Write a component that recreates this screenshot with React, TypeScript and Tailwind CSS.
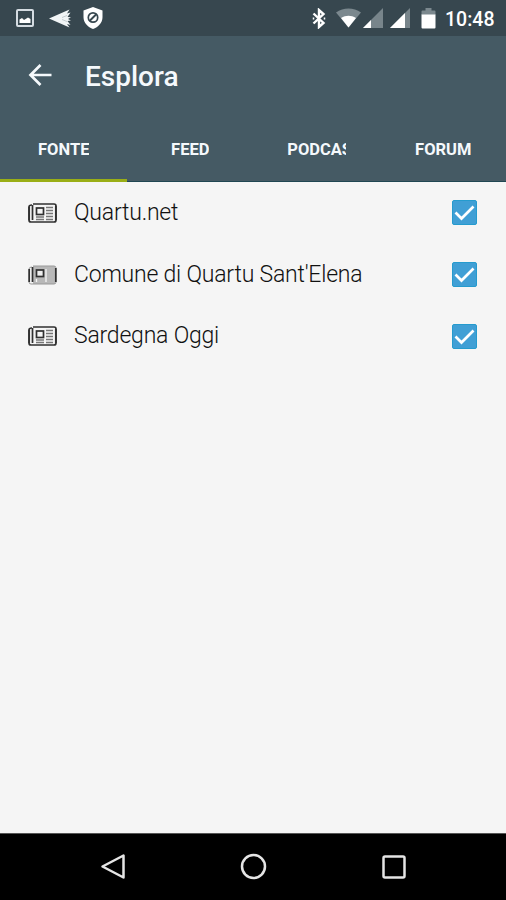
const FONT = "font-['Roboto','Liberation_Sans',sans-serif]";

function StatusBar() {
  return (
    <div className="flex h-9 shrink-0 items-center bg-[#37474f] pl-4 pr-[11px] text-white">
      <svg className="h-[18px] w-[18px]" viewBox="0 0 18 18">
        <rect x="1" y="1" width="16" height="16" rx="1" fill="none" stroke="#d5dce2" strokeWidth="2" />
        <path d="M3.500 14V10.500L6 9l2 2 4-2.500 2.500 1.500v4Z" fill="#fff" />
      </svg>
      <svg className="ml-[15px] h-[19px] w-[22px]" viewBox="0 0 22 19" fill="#f1f5f6">
        <path d="M0 9.500 20.500 0.500 18 4.500l3.500-1L18.500 8l3.500.2L19 10l3 1.500-3.500.500 3 4-3.500-1L20.500 18.500Z" />
        <path d="M13 8.500 18 6.500M13 10.500 18 12.500" stroke="#a4b0b5" strokeWidth="0.600" />
      </svg>
      <svg className="ml-3 h-[22px] w-5" viewBox="0 0 20 22">
        <path d="M10 0 19.500 3.500V10c0 6-4.500 10-9.500 12C5 20 .5 16 .5 10V3.500Z" fill="#fff" />
        <circle cx="10" cy="10.500" r="4.700" fill="none" stroke="#37474f" strokeWidth="1.700" />
        <path d="m6.500 14 7-7" stroke="#37474f" strokeWidth="2" />
      </svg>
      <div className="ml-auto flex items-center">
        <svg className="h-[21px] w-[14px]" viewBox="0 0 14 21" fill="none" stroke="#fff" strokeWidth="2.400">
          <path d="m1.500 5.500 10 9.500L7 19v-17l4.500 4L1.500 15.500" />
          <path d="M1.500 9.500v2M12.500 9.500v2" strokeWidth="1.500" />
        </svg>
        <svg className="ml-[10px] h-5 w-[25px]" viewBox="0 0 25 20">
          <path d="M0 4.500C7.500-1 17.500-1 25 4.500L12.500 19.500Z" fill="#7b888e" />
          <path d="M5 10C10 7 15 7 20 10L12.500 19.500Z" fill="#fff" />
        </svg>
        <svg className="ml-[2px] h-5 w-5" viewBox="0 0 20 20">
          <path d="M20 0v20H0Z" fill="#78858b" />
          <path d="M8 12v8H0Z" fill="#fff" />
        </svg>
        <svg className="ml-[7px] h-5 w-5" viewBox="0 0 20 20">
          <path d="M20 0v20H0Z" fill="#78858b" />
          <path d="M15 5v15H0Z" fill="#fff" />
        </svg>
        <svg className="ml-[11px] h-[21px] w-[15px]" viewBox="0 0 15 21">
          <path d="M.5 7V3.500q0-1 1-1h3V0h6v2.500h3q1 0 1 1V7Z" fill="#7b888e" />
          <path d="M.5 6.500h14V19.500q0 1-1 1h-12q-1 0-1-1Z" fill="#fff" />
        </svg>
        <span className="ml-[9px] w-[50px] whitespace-nowrap pt-[3px] text-[19.500px] font-medium leading-none">10:48</span>
      </div>
    </div>
  );
}

const tabs = ["FONTE", "FEED", "PODCAST", "FORUM"];

function Header() {
  return (
    <header className="flex h-[146px] shrink-0 flex-col bg-[#455a64] text-[#f5f9fc]">
      <div className="flex h-20 items-center pl-7">
        <svg className="mb-[2px] h-6 w-6" viewBox="0 0 24 24" fill="none" stroke="currentColor" strokeWidth="2.700">
          <path d="M23.500 12H2.500M12.500 2 2.500 12l10 10" />
        </svg>
        <h1 className="ml-[33px] pt-[2px] text-[28px] font-medium leading-8">Esplora</h1>
      </div>
      <nav className="grid min-h-0 flex-1 grid-cols-4">
        {tabs.map((tab, index) => (
          <button
            key={tab}
            className={`flex items-center justify-center pl-px ${index === 0 ? "border-b-[3px] border-[#9aae16] pt-[5px]" : "border-b border-[#204652] pt-[3px]"} text-[16.500px] font-bold leading-5`}
          >
            <span className="max-w-[59px] overflow-hidden whitespace-nowrap">{tab}</span>
          </button>
        ))}
      </nav>
    </header>
  );
}

function Newspaper({ faded }: { faded?: boolean }) {
  return (
    <svg className="h-5 w-[29px] shrink-0" viewBox="0 0 29 20" fill="none" stroke="#303030">
      {faded && <rect x="5" y="1" width="22" height="18" fill="#b8b8b8" stroke="none" />}
      <path d="M5 1h21q2 0 2 2v14q0 2-2 2H3q-2 0-2-2V4q0-2 3-2" strokeWidth={faded ? 1 : 1.700} stroke={faded ? "#999" : "#303030"} />
      <path d="M1.200 4v13M4.500 2v15M27.800 3v14" strokeWidth="1.700" />
      <rect x="8.500" y="5" width="7" height="6.500" strokeWidth="1.700" fill={faded ? "#eee" : "none"} />
      <path
        d={faded ? "M18 4v13M8.500 14v3" : "M18 4.500h7M18 7.500h7M18 10.500h7M18 13.500h7M18 16.500h7M8 14h8M8 16.500h8"}
        stroke={faded ? "#f5f5f5" : "#777"}
        strokeWidth="1.300"
      />
    </svg>
  );
}

const sources = [
  { name: "Quartu.net", faded: false },
  { name: "Comune di Quartu Sant'Elena", faded: true },
  { name: "Sardegna Oggi", faded: false },
];

function Checkbox() {
  return (
    <span role="checkbox" aria-checked="true" className="ml-auto flex h-[25px] w-[25px] items-center justify-center rounded-[2px] border border-[#259bce] bg-[#409fd5]">
      <svg className="h-[19px] w-[21px]" viewBox="0 0 21 19" fill="none" stroke="#fff" strokeWidth="2.700">
        <path d="m1.500 9.500 6 6L19.500 3.500" />
      </svg>
    </span>
  );
}

export default function App() {
  return (
    <div className={`flex h-[900px] w-[506px] flex-col overflow-hidden bg-[#f5f5f5] ${FONT}`}>
      <StatusBar />
      <Header />
      <main className="flex-1">
        {sources.map((source) => (
          <div key={source.name} className="flex h-[61.800px] items-center pl-7 pr-[29px]">
            <Newspaper faded={source.faded} />
            <span className="ml-[17px] whitespace-nowrap text-[23px] font-light leading-7 tracking-[-0.210px] text-[#111]">{source.name}</span>
            <Checkbox />
          </div>
        ))}
      </main>
      <footer className="flex h-[67px] shrink-0 items-center justify-between border-t border-[#555] bg-black pl-[100px] pr-[98px]">
        <svg className="h-7 w-7" viewBox="0 0 28 28" fill="none" stroke="#e5e5e5" strokeWidth="2.500" strokeLinejoin="round">
          <path d="M23.500 2.500v22L2.500 13.500Z" />
        </svg>
        <svg className="h-7 w-7" viewBox="0 0 28 28" fill="none" stroke="#e5e5e5" strokeWidth="2.500">
          <circle cx="13.500" cy="13.500" r="11.500" />
        </svg>
        <svg className="h-7 w-7" viewBox="0 0 28 28" fill="none" stroke="#e5e5e5" strokeWidth="2.500">
          <rect x="3.500" y="3.500" width="21" height="21" rx="1.500" />
        </svg>
      </footer>
    </div>
  );
}
